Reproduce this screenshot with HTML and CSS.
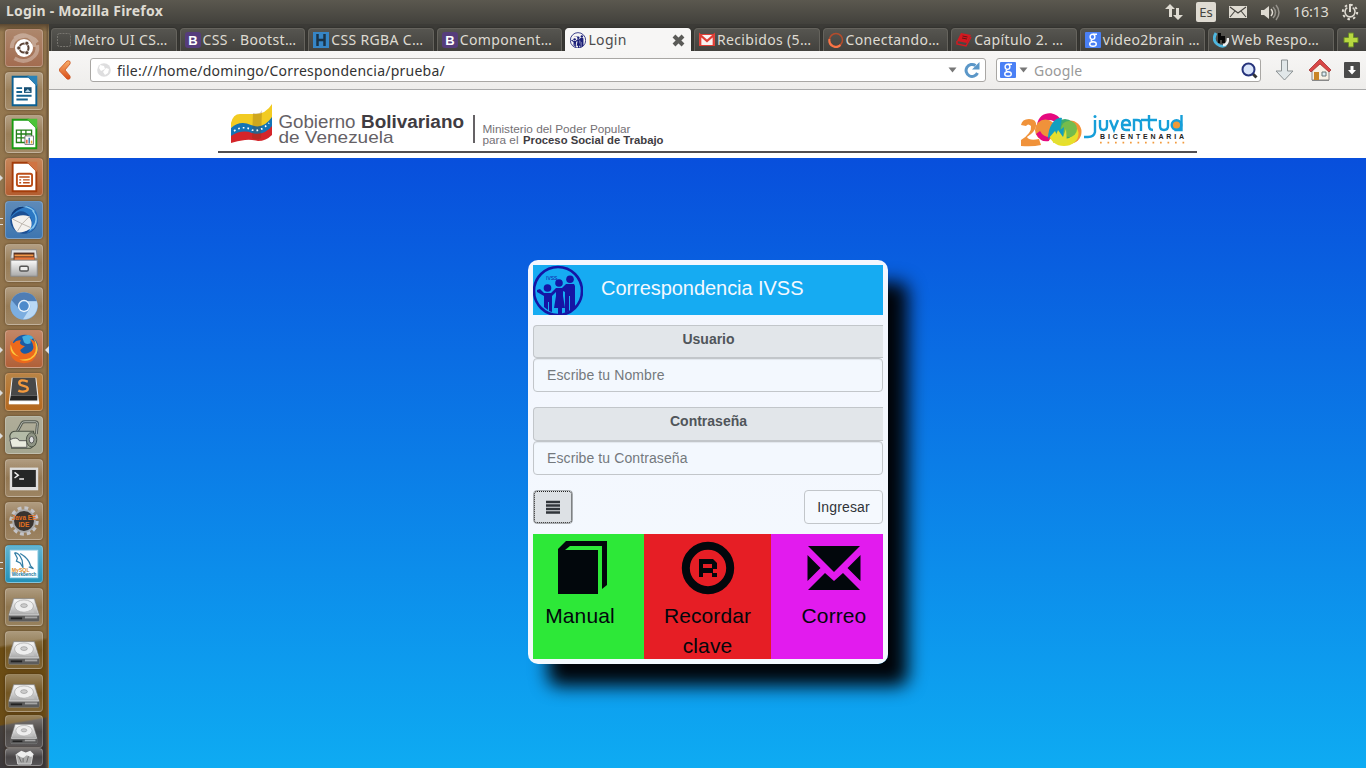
FILE: index.html
```html
<!DOCTYPE html>
<html lang="es">
<head>
<meta charset="utf-8">
<title>Login</title>
<link rel="stylesheet" href="styles.css">
</head>
<body>
<svg class="defs" width="0" height="0" aria-hidden="true">
  <defs>
    <linearGradient id="metal" x1="0" y1="0" x2="0" y2="1"><stop offset="0" stop-color="#fafafa"/><stop offset="1" stop-color="#a9a9a9"/></linearGradient>
    <linearGradient id="orange" x1="0" y1="0" x2="0" y2="1"><stop offset="0" stop-color="#f9b06c"/><stop offset="1" stop-color="#d84c17"/></linearGradient>
    <symbol id="disk" viewBox="0 0 38 38">
      <path d="M8 10h22l5 17v6q0 1-1 1H4q-1 0-1-1v-6z" fill="#d8d8d8" stroke="#777" stroke-width=".6"/>
      <path d="M9 11h20l5 16H4z" fill="url(#metal)"/>
      <ellipse cx="19" cy="18" rx="10" ry="6.500" fill="#eee" stroke="#aaa" stroke-width=".8"/>
      <ellipse cx="19" cy="17.500" rx="3.500" ry="2" fill="#ccc" stroke="#888" stroke-width=".6"/>
      <path d="M19 25l9-4 2 4z" fill="#c2c2c2"/>
      <path d="M3 28h32v5q0 1-1 1H4q-1 0-1-1z" fill="#5c5c5c"/><path d="M5 31h12" stroke="#222" stroke-width="2"/><path d="M20 30h13" stroke="#a5a5a5" stroke-width="2"/>
    </symbol>
    <symbol id="boot" viewBox="0 0 16 16"><rect width="16" height="16" rx="3" fill="#563d7c"/><text x="8" y="13" text-anchor="middle" class="fav-bold" fill="#fff">B</text></symbol>
    <symbol id="goog" viewBox="0 0 16 16"><rect width="16" height="16" rx="1" fill="#4a80f5"/><g fill="none" stroke="#fff" stroke-width="1.400"><ellipse cx="7.500" cy="4.800" rx="2.400" ry="2.600"/><path d="M8 2.200h4M7 7.500q-2 1.500 1 2.200"/><ellipse cx="8" cy="12" rx="3.300" ry="2.300"/></g></symbol>
    <symbol id="family" viewBox="0 0 50 50">
      <circle cx="25" cy="26" r="24" fill="none" stroke="currentColor" stroke-width="2.600"/>
      <g fill="currentColor"><circle cx="14.500" cy="23" r="3.800"/><circle cx="26" cy="18" r="3.800"/><circle cx="37" cy="14.300" r="3.800"/>
      <path d="M4 25l3-1 4 4h7l5-5h6l4-4h8l1 2v22l-5 4V31h-1v15l-4 2V27l-2-1v5l2 12h-3v7h-4v-7h-4l2-12v-4l-4 4v16l-3-1V37h-1v8l-4-3V31l-7-4z"/></g>
      <text x="13" y="15" class="tiny" fill="currentColor">IVSS</text>
    </symbol>
  </defs>
</svg>

<header class="topbar">
  <span class="window-title">Login - Mozilla Firefox</span>
  <div class="indicators">
    <svg width="18" height="18" viewBox="0 0 18 18" fill="#dfdbd2"><path d="M5 1l5 5H7v8H4V6H0zM13 17l-5-5h3V5h3v7h4z"/></svg>
    <span class="lang">Es</span>
    <svg width="18" height="14" viewBox="0 0 18 14"><path d="M0 1h18v12H0z" fill="#dfdbd2"/><path d="M1 2l8 6 8-6M1 12l5-6M17 12l-5-6" fill="none" stroke="#45433e" stroke-width="1.100"/></svg>
    <svg width="21" height="17" viewBox="0 0 21 17"><path d="M1 6h3l5-4v13l-5-4H1z" fill="#dfdbd2"/><g fill="none" stroke-width="1.500"><path d="M11 5q3 3.500 0 7" stroke="#dfdbd2"/><path d="M13 3q5 5.500 0 11M16 1q6 7.500 0 15" stroke="#96938c"/></g></svg>
    <span class="clock">16:13</span>
    <svg width="18" height="18" viewBox="0 0 18 18" fill="none" stroke="#dfdbd2"><circle cx="9" cy="9" r="7.200" stroke-width="2" stroke-dasharray="2.500 3.150"/><path d="M6.300 4.700a5 5 0 1 0 5.400 0" stroke-width="1.600"/><path d="M9 1v8" stroke-width="2"/></svg>
  </div>
</header>

<div class="desktop">
<nav class="launcher">
  <div class="tile t-dash"><svg viewBox="0 0 38 38"><path d="M6 19C6 5 25 2 33 13M9 30c12 7 26-1 24-14M9 9c10-8 21-1 21 9" fill="none" stroke="#fff" stroke-opacity=".3" stroke-width="4"/><circle cx="19" cy="19" r="9.500" fill="#fff"/><circle cx="19" cy="19" r="4.800" fill="none" stroke="#5b4336" stroke-width="2.200"/><g fill="#5b4336" stroke="#fff" stroke-width=".8"><circle cx="13.500" cy="19" r="2.200"/><circle cx="22" cy="14" r="2.200"/><circle cx="22" cy="24" r="2.200"/></g></svg></div>
  <div class="tile"><svg viewBox="0 0 38 38"><path d="M7 4h17l8 8v22H7z" fill="#fff" stroke="#0b5f92" stroke-width="2"/><path d="M22 3h11v11z" fill="#2b83b8"/><path d="M11 16h6M11 20h6M11 24h16M11 28h12" stroke="#16628f" stroke-width="2"/><path d="M19 15h8v6h-8z" fill="#164e72"/><path d="M20 20l3-3 3 3z" fill="#b3d3e6"/></svg></div>
  <div class="tile"><svg viewBox="0 0 38 38"><path d="M7 4h17l8 8v22H7z" fill="#fff" stroke="#199c12" stroke-width="2"/><path d="M22 3h11v11z" fill="#4cc338"/><path d="M11 15h16v13H11zM11 19h16M11 23h16M16 15v13M21 15v13" fill="none" stroke="#237e19" stroke-width="1.400"/><path d="M20 21h9v9h-9z" fill="#fff" stroke="#777"/><path d="M22 29v-4" stroke="#df542d" stroke-width="1.500"/><path d="M24.500 29v-6" stroke="#3675a8" stroke-width="1.500"/><path d="M27 29v-3" stroke="#e6aa27" stroke-width="1.500"/></svg></div>
  <div class="tile t-orange open"><svg viewBox="0 0 38 38"><path d="M7 4h17l8 8v22H7z" fill="#fff" stroke="#a33c0a" stroke-width="2"/><path d="M22 3h11v11z" fill="#d07442"/><rect x="11.500" y="15.500" width="16" height="13" rx="2" fill="#fff" stroke="#bb4d17" stroke-width="2"/><path d="M14 19h11M18 22h7M18 25h7M14 22h2M14 25h2" stroke="#bb4d17" stroke-width="1.500"/></svg></div>
  <div class="tile t-blue open two"><svg viewBox="0 0 38 38"><circle cx="19" cy="19" r="14.500" fill="#1c4f94"/><path d="M4 19C6 5 23-1 31 9c6 9 2 20-9 24 5-6 7-13 3-18C19 8 12 7 4 19z" fill="#2b78c4"/><path d="M6 18q9-6 18-3 5 6 2 13-8 5-14 4-5-4-6-14z" fill="#f4f1ee"/><path d="M7 18l10 5 8-8M12 31l5-8 9 4" fill="none" stroke="#bcb5ae"/><path d="M10 8q10-7 20 2M28 9q8 9 0 19M31 14q3 8-6 16" fill="none" stroke="#8bc7ed" stroke-width="1.200"/><path d="M5 16Q8 3 21 5 10 8 5 16z" fill="#123a78"/></svg></div>
  <div class="tile"><svg viewBox="0 0 38 38"><path d="M6 5h26l1 9H5z" fill="#e2e2e2" stroke="#888"/><path d="M8 8h22v9H8z" fill="#563122"/><path d="M9 10h20v2H9z" fill="#f39849"/><path d="M9 13h21v3H9z" fill="#e8763a"/><path d="M5 16h28v17H5z" fill="url(#metal)" stroke="#888"/><rect x="14.500" y="22.500" width="9" height="5" rx="1.500" fill="#eee" stroke="#555" stroke-width="1.500"/></svg></div>
  <div class="tile"><svg viewBox="0 0 38 38"><circle cx="19" cy="19" r="14.500" fill="#7caee0"/><path d="M6 13a14.500 14.500 0 0 1 26.500 1H19a6 6 0 0 0-6 7z" fill="#4f7db4"/><path d="M32.500 14a14.500 14.500 0 0 1-14.500 19l7-11q2-5-2-8z" fill="#b9d8f4"/><circle cx="19" cy="19" r="6.500" fill="#e8f2fb"/><circle cx="19" cy="19" r="5" fill="#4e8acb"/></svg></div>
  <div class="tile t-fire open active"><svg viewBox="0 0 38 38"><circle cx="20" cy="18" r="14" fill="#1b5ba5"/><path d="M17 6q8-4 12 1-4 3-3 6-5 2-7-1z" fill="#43aee0"/><path d="M5 10l3 3q3-4 8-3-3 3 1 5l3 1-5 4q2 6 9 3 7-2 4-10l-3-5q10 4 8 15-3 11-14 11Q5 33 4 20z" fill="#ed691c"/><path d="M28 6q10 12 2 21-7 7-16 3 14 1 17-8 2-8-3-16zM5 14q2 10 9 13Q3 25 5 14z" fill="#fbc43b"/></svg></div>
  <div class="tile t-sub open"><svg viewBox="0 0 38 38"><path d="M6 4h26l3 26H3z" fill="#eee"/><path d="M7 4h24l2 19H5z" fill="#484848"/><path d="M5 23h28v5H4z" fill="#242424"/><path d="M3 30.500h32" stroke="#fff" stroke-width="3"/><path d="M23 8q-9-3-9 1.500c0 4 9 2 9 6 0 3-6 4-10 2" fill="none" stroke="#f49a3e" stroke-width="2.500"/></svg></div>
  <div class="tile t-print open"><svg viewBox="0 0 38 38"><path d="M12 15l5-9q1-1 3-1h11q3 0 2 4l-1 9" fill="none" stroke="#555a50" stroke-width="3"/><path d="M12 15l5-9q1-1 3-1h11q3 0 2 4l-1 9" fill="none" stroke="#b9bcb4"/><path d="M4 20q1-5 6-5h19l2 14-5 4H6z" fill="#b4bba7" stroke="#4a5044" stroke-width="1.200"/><path d="M4 24q8-4 10 1h8v7H6z" fill="#e9ebdf" stroke="#555"/><ellipse cx="27" cy="24" rx="5.500" ry="7.500" fill="#8e9484" stroke="#4a5044"/><ellipse cx="27" cy="24" rx="2.500" ry="3.500" fill="#ddd" stroke="#555"/></svg></div>
  <div class="tile"><svg viewBox="0 0 38 38"><path d="M4 8h30v24H4z" fill="#ddd"/><path d="M6.500 10.500h25v18h-25z" fill="#252727"/><path d="M9 13l4 3-4 3M14 20h5" fill="none" stroke="#eee" stroke-width="1.500"/></svg></div>
  <div class="tile"><svg viewBox="0 0 38 38"><circle cx="19" cy="19" r="13.500" fill="none" stroke="#c4c4c8" stroke-width="4" stroke-dasharray="4 3.070"/><circle cx="19" cy="19" r="11.500" fill="#39332f" stroke="#aaa" stroke-width="2"/><text x="6" y="18" class="java" fill="#e3701f" textLength="26" lengthAdjust="spacingAndGlyphs">Java EE</text><text x="19" y="25.500" text-anchor="middle" class="java" fill="#e3701f">IDE</text></svg></div>
  <div class="tile t-sql open two"><svg viewBox="0 0 38 38"><rect x="4.500" y="4.500" width="29" height="29" fill="#fff" stroke="#b7dff0"/><path d="M9 7q5 0 8 8l1 8-3-5-4-2 1-3-3-6M15 8q9 5 11 13l3 3-5-2" fill="none" stroke="#357fa6" stroke-width="1.300"/><text x="6" y="27" class="sql" fill="#dc8b26">MySQL</text><text x="6" y="32" class="sql" fill="#14759b" textLength="26" lengthAdjust="spacingAndGlyphs">Workbench</text></svg></div>
  <div class="tile"><svg><use href="#disk"/></svg></div>
  <div class="tile"><svg><use href="#disk"/></svg></div>
  <div class="tile"><svg><use href="#disk"/></svg></div>
  <div class="tile folded"><svg><use href="#disk"/></svg></div>
  <div class="tile bin"><svg viewBox="0 0 38 18"><path d="M10 6h19l-2 11H12z" fill="#aaa" stroke="#ddd"/><path d="M13 8l3 7M18 8v7M24 8l-2 7" stroke="#666"/><path d="M11 5l5-3 5 2 5-2 4 4-3 3-5-2-4 3-5-2z" fill="#eee"/></svg></div>
</nav>

<main class="browser">
  <div class="tabs">
    <div class="tab"><svg width="16" height="16"><rect x="1.500" y="1.500" width="13" height="13" rx="2" fill="none" stroke="#77756f" stroke-dasharray="2 1"/></svg><span>Metro UI CS…</span></div>
    <div class="tab"><svg width="16" height="16"><use href="#boot"/></svg><span>CSS · Bootst…</span></div>
    <div class="tab"><svg width="16" height="16"><path d="M0 0h16v16H0z" fill="#3685c5"/><path d="M4.500 2v12M11.500 2v12M4 8h8" stroke="#1b3346" stroke-width="2.500"/></svg><span>CSS RGBA C…</span></div>
    <div class="tab"><svg width="16" height="16"><use href="#boot"/></svg><span>Component…</span></div>
    <div class="tab selected"><svg width="16" height="16" color="#1b1f78"><use href="#family"/></svg><span>Login</span><svg class="close" width="13" height="13" viewBox="0 0 13 13"><path d="M2 2l9 9M11 2l-9 9" stroke="#5b5b58" stroke-width="4"/></svg></div>
    <div class="tab"><svg width="16" height="16"><path d="M0 2h16v12H0z" fill="#f7f2f1"/><path d="M1.200 14V3l6.800 6 6.800-6v11" fill="none" stroke="#de3e35" stroke-width="2.300"/><path d="M0 2.500h16M0 13.500h16" stroke="#de3e35"/></svg><span>Recibidos (5…</span></div>
    <div class="tab"><svg width="16" height="16" fill="none"><circle cx="8" cy="8" r="6.500" stroke="#b44c2c" stroke-width="1.500"/><path d="M1.500 7a6.500 6.500 0 0 0 11 6" stroke="#fa7547" stroke-width="2"/></svg><span>Conectando…</span></div>
    <div class="tab"><svg width="16" height="16"><path d="M5 1l10 2-4 8-10-2z" fill="#d61820"/><path d="M1 9v3l9 2 5-9" fill="none" stroke="#d61820" stroke-width="1.500"/><path d="M6.500 4l5 1M6 6l5 1" stroke="#681414"/></svg><span>Capítulo 2. …</span></div>
    <div class="tab"><svg width="16" height="16"><use href="#goog"/></svg><span>video2brain …</span></div>
    <div class="tab"><svg width="16" height="16"><path d="M3 1q-4 7 1 11 5 4 9 1" fill="none" stroke="#4eb7df" stroke-width="2.800"/><path d="M10 13q5 0 5-7" fill="none" stroke="#eee" stroke-width="2.500"/><path d="M5 1h3v3h4v7H9V8H7v3H5z" fill="#080808"/></svg><span>Web Respo…</span></div>
    <div class="tab newtab"><svg width="16" height="16"><path d="M5.500 1h5v4.500H15v5h-4.500V15h-5v-4.500H1v-5h4.500z" fill="#b8d840" stroke="#69882b"/></svg></div>
  </div>
  <div class="toolbar">
    <svg class="back" width="13" height="20" viewBox="0 0 13 20"><path d="M8 1q4-1 3 3l-5 6 5 6q1 4-3 3L.500 11V9z" fill="url(#orange)" stroke="#c9541f" stroke-width=".8"/></svg>
    <div class="address"><svg width="14" height="14"><circle cx="7" cy="7" r="6.800" fill="#dededf"/><path d="M3 2l4 1 1 3-4 2-2-3zM9 5l3 1-1 4-3 2-2-3z" fill="#fff"/></svg><span>file:///home/domingo/Correspondencia/prueba/</span>
      <svg class="drop" width="9" height="6"><path d="M.500.500h8L4.500 5.500z" fill="#777"/></svg><svg class="reload" width="16" height="16"><path d="M13.500 11a6 6 0 1 1-2-7.500" fill="none" stroke="#5b97c8" stroke-width="3"/><path d="M15.500 0v7.500H8z" fill="#5b97c8"/></svg></div>
    <div class="search"><svg width="16" height="16"><use href="#goog"/></svg><svg class="drop2" width="9" height="6"><path d="M.500.500h8L4.500 5.500z" fill="#777"/></svg><span>Google</span><svg class="lens" width="17" height="17"><path d="M11 11l4.500 4.500" stroke="#333" stroke-width="3"/><circle cx="7.500" cy="7.500" r="6" fill="#dae5fa" stroke="#26337c" stroke-width="2"/></svg></div>
    <svg class="download" width="19" height="22"><path d="M6.500 1h6v11H18l-8.500 9L1 12h5.500z" fill="#e1e7e9" stroke="#8b9193"/></svg>
    <svg class="home" width="24" height="24"><path d="M4 12v10h17V12l-8-8z" fill="#f7f1e6" stroke="#888"/><path d="M6 14h5v8H6z" fill="#c98425"/><path d="M14 14h4v4h-4z" fill="#ddecf5" stroke="#677"/><path d="M4 22.500h17" stroke="#888"/><path d="M1 12L12 1l11 11-2 2-9-8-9 8z" fill="#d94746" stroke="#a33332" stroke-width=".8"/></svg>
    <svg class="save" width="16" height="16"><rect width="16" height="16" rx="1" fill="#4a4a4a"/><path d="M6.500 4h3v4h2.500l-4 4.500L4 8h2.500z" fill="#fff"/></svg>
  </div>

  <section class="page">
    <div class="banner">
      <svg width="980" height="68" viewBox="218 90 980 68">
        <path d="M231 123q2-9 9-9 8 0 15 0 11 0 17-10v17q-9 10-20 5-12-5-21 2z" fill="#f2cb22"/>
        <path d="M231 128q9-8 20-3 12 5 21-8v13q-8 10-20 5-12-4-21 3z" fill="#1474b6"/>
        <path d="M231 136q11-7 21-3 12 3 20-7v9q-6 6-14 6-8-2-13-1-8 1-14 3z" fill="#d4252a"/>
        <path d="M253 113q7 2 9-3l-1 28q-5 3-9 0z" fill="#663a12" opacity=".25"/>
        <path d="M234 131q9-6 18-1 9 2 17-7" fill="none" stroke="#fff" stroke-width="1.700" stroke-dasharray="1.700 3"/>
        <text x="278.500" y="128.300" class="gov" textLength="77" lengthAdjust="spacingAndGlyphs">Gobierno</text><text x="361" y="128.300" class="gov gov-bold" textLength="103" lengthAdjust="spacingAndGlyphs">Bolivariano</text>
        <text x="278.500" y="143" class="gov second-line" textLength="115" lengthAdjust="spacingAndGlyphs">de Venezuela</text>
        <path d="M474 115v28" stroke="#656265" stroke-width="2"/>
        <text x="482.500" y="133" class="min" textLength="148" lengthAdjust="spacingAndGlyphs">Ministerio del Poder Popular</text>
        <text x="482.500" y="143.500" class="min" textLength="36" lengthAdjust="spacingAndGlyphs">para el</text><text x="523" y="143.500" class="min min-bold" textLength="140.500" lengthAdjust="spacingAndGlyphs">Proceso Social de Trabajo</text>
        <path d="M218 152h979" stroke="#504e52" stroke-width="2"/>
        <path d="M1037 125c2-14 18-15 24-5l-4 4c-6-7-14-4-16 3z" fill="#e5097f"/>
        <circle cx="1045.500" cy="130" r="10.500" fill="#f0923a"/>
        <path d="M1036 134q5 9 13 7l1-4q-7 0-10-6z" fill="#e5097f"/>
        <circle cx="1070" cy="132" r="11.500" fill="#f39336"/><ellipse cx="1064" cy="134" rx="14.500" ry="12" fill="#e7df2a"/><circle cx="1065" cy="129" r="10" fill="#3eab6c"/><circle cx="1069" cy="129" r="8" fill="#75bc4c"/>
        <path d="M1048 139c0-14 8-23 14-21l-2 12 4-3-1 11-8-7z" fill="#119fc0"/><path d="M1053 143l5-13 5 7 3-8 1 14z" fill="#e3df33"/>
        <path d="M1021 125q1-6 8-6 8 0 7 7-1 6-9 11 2 4 12 2l2 6q-8 2-20 1v-6q11-7 10-14-3-3-5 0z" fill="#f0923a"/>
        <g fill="none" stroke="#169fd9" stroke-width="2.400"><path d="M1095 120v12q-1 5-7 5h-4"/><path d="M1100 120v6q0 4 3.500 4t3.500-4v-6M1110 120l4 10 4-10M1122 125h8q0-5-4-5t-4 5 4 5h4M1134 131v-11h3q4 0 4 4v7M1149 115v11q0 4 4 4M1141 120h16M1160 120v6q0 4 4 4t4-4v-6M1181.500 115v15h-7"/><circle cx="1176.500" cy="125" r="4.800" fill="#f19a37"/></g><circle cx="1095" cy="116.500" r="1.500" fill="#169fd9"/>
        <g class="bic"><text x="1100" y="138.500" textLength="84">BICENTENARIA</text></g>
        <path d="M1100 142.700h87" stroke="#f29b3e" stroke-width="1.700" stroke-dasharray="1.700 5.800"/>
      </svg>
    </div>
    <div class="stage">
      <form class="card">
        <div class="card-head"><svg width="50" height="50" color="#1515a5"><use href="#family"/></svg><h1>Correspondencia IVSS</h1></div>
        <label class="label">Usuario</label>
        <input class="field" type="text" placeholder="Escribe tu Nombre">
        <label class="label second">Contraseña</label>
        <input class="field" type="text" placeholder="Escribe tu Contraseña">
        <div class="actions"><button type="button" class="btn menu"><svg width="14" height="14"><path d="M0 2h14M0 5.500h14M0 9h14M0 12.500h14" stroke="#30353a" stroke-width="2.400"/></svg></button><button type="button" class="btn">Ingresar</button></div>
        <div class="shortcuts">
          <div class="box green"><svg width="54" height="54" viewBox="0 0 54 54" fill="#02070c"><path d="M3 8l8-8h41v44l-5 4V5H15l-5 4h33v44H3z"/></svg><span>Manual</span></div>
          <div class="box red"><svg width="54" height="54" viewBox="0 0 54 54"><circle cx="27" cy="27" r="22.200" fill="none" stroke="#02070c" stroke-width="8"/><path d="M18 18h14l4 4v6h-4v4h4v4h-5v-4h-9v4h-4zm4 5v4h9v-4z" fill="#02070c" fill-rule="evenodd"/></svg><span>Recordar clave</span></div>
          <div class="box pink"><svg width="54" height="54" viewBox="0 0 54 54" fill="#02070c"><path d="M1 5h52L27 31zM.500 14L13.500 27 .500 40zM53.500 14L40.500 27l13 13zM1 49l17-17 9 8 9-8 17 17z"/></svg><span>Correo</span></div>
        </div>
      </form>
    </div>
  </section>
</main>
</div>
</body>
</html>
```
FILE: styles.css
```css
* { box-sizing: border-box; }
html, body { margin: 0; width: 1366px; height: 768px; overflow: hidden; }
body { font-family: "Noto Sans", "Open Sans", sans-serif; font-size: 14px; display: flex; flex-direction: column; }
svg { display: block; flex: none; }
.defs { position: absolute; }
.topbar { height: 24px; flex: none; display: flex; align-items: center; justify-content: space-between; padding: 0 7px 0 6px; background: linear-gradient(#5b584f, #42413c); color: #dfdbd2; }
.window-title { font-weight: 700; letter-spacing: .22px; line-height: 22px; padding-bottom: 2px; }
.indicators { display: flex; align-items: center; }
.lang { margin: 0 13px 0 13px; width: 20px; height: 20px; border-radius: 2px; background: #dfdbd2; color: #45433e; font-size: 13px; line-height: 20px; text-align: center; }
.indicators svg:nth-of-type(3) { margin-left: 13px; }
.clock { margin: 0 12px; padding-bottom: 2px; font-size: 14.500px; letter-spacing: -.3px; width: 36px; white-space: nowrap; }
.desktop { display: flex; height: 744px; }
.launcher { width: 49px; flex: none; padding: 5px 0 0 5px; background: linear-gradient(#5b4730 0, transparent 8px), linear-gradient(90deg, transparent 45px, #695338 48px, #b19b70 49px), linear-gradient(170deg, #967951 0, #8c6f48 530px, #866d42 612px, #6b4c13 615px, #6b4d17 690px, #45403d 692px, #38363a 744px); }
.tile { position: relative; width: 38px; height: 38px; margin-bottom: 5px; border: 1px solid rgba(255,255,255,.22); border-radius: 4px; background: linear-gradient(rgba(255,255,255,.3), rgba(255,255,255,.06) 50%, rgba(255,255,255,.14)); box-shadow: 0 0 3px rgba(50,30,10,.6); }
.tile svg { width: 36px; height: 36px; }
.t-dash { background: linear-gradient(#ad876c, #a36c50); }
.t-orange { background: linear-gradient(#c78558, #b45e31); }
.t-blue { background: linear-gradient(#5e8ab8, #3e76b0); }
.t-fire { background: linear-gradient(#c18666, #b16038); }
.t-sub { background: linear-gradient(#b98445, #b4681f); }
.t-print { background: linear-gradient(#b0ad99, #a5a691); }
.t-sql { background: linear-gradient(#62b4d1, #2492b9); }
.open::before { content: ""; position: absolute; left: -6px; top: 16px; border: 3px solid transparent; border-left-color: #ddd; border-right: 0; }
.two::before { width: 3px; height: 5px; border: solid #ddd; border-width: 1px 0; }
.active::after { content: ""; position: absolute; right: -7px; top: 15px; border: 4px solid transparent; border-right-color: #ddd; border-left: 0; }
.folded { height: 33px; margin: -2px 0 0; }
.folded svg { height: 31px; }
.bin { height: 18px; margin: 0; }
.bin svg { height: 16px; }
.browser { width: 1317px; height: 744px; }
.tabs { height: 27px; padding: 4px 0 0 2px; display: flex; gap: 3px; background: #3c3b37; overflow: hidden; }
.tab { width: 125.6px; flex: none; height: 23px; padding: 0 5px 0 4px; display: flex; align-items: center; gap: 2px; color: #dfdbd2; background: linear-gradient(#565550, #42413d); border: 1px solid #65635d; border-bottom: 0; border-radius: 4px 4px 0 0; white-space: nowrap; box-shadow: 0 0 2px #20201d; }
.tab span { letter-spacing: .35px; padding-bottom: 2px; }
.selected { background: #f7f6f5; border-color: #f7f6f5; color: #4c4c4c; }
.close { margin-left: auto; }
.newtab { width: 34px; padding-left: 5px; }
.toolbar { height: 39px; border-bottom: 1px solid #aaa; padding: 0 0 0 10px; display: flex; align-items: center; background: linear-gradient(#f7f6f5, #eeedeb); }
.address, .search { height: 24px; border: 1px solid #a9a7a4; border-radius: 3px; background: #fff; display: flex; align-items: center; color: #333; white-space: nowrap; }
.address { width: 896px; margin-left: 18px; padding: 0 5px 0 6px; }
.address span { margin-left: 6px; font-size: 14px; letter-spacing: .24px; }
.drop { margin-left: auto; margin-right: 7px; }
.search { width: 265px; margin-left: 10px; padding: 0 2px 0 3px; color: #999; }
.search span { letter-spacing: .2px; }
.drop2 { margin: 0 6px 0 3px; }
.lens { margin-left: auto; }
.download { margin-left: 14px; }
.home { margin-left: 14px; }
.save { margin-left: 12px; }
.banner { height: 68px; background: #fff; padding-left: 169px; }
.stage { height: 610px; padding: 102px 0 0 479px; background: linear-gradient(#084fdc, #0eabf2); }
.card { width: 360px; height: 404px; padding: 5px; border-radius: 10px; background: linear-gradient(#f3f6fe, #f4f9fe); box-shadow: 20px 22px 18px #02050a; font-family: "Liberation Sans", Arial, sans-serif; }
.card-head { height: 50px; display: flex; background: #16abf2; }
.card-head h1 { margin: 11px 0 0 18px; font-size: 20px; line-height: 24px; font-weight: 400; letter-spacing: -.05px; color: #f4f8fe; }
.label { display: block; height: 33px; margin-top: 10px; padding-top: 5px; border: 1px solid #c2c6ca; border-right: 0; border-radius: 4px 0 0 4px; background: #e2e6ea; color: #50555a; font-weight: 700; font-size: 14px; line-height: 16px; text-align: center; }
.second { height: 34px; margin-top: 15px; }
.field { display: block; width: 350px; height: 34px; padding: 0 13px; border: 1px solid #c2c6ca; border-radius: 4px; background: #f3f8fe; font: 14px "Liberation Sans", Arial, sans-serif; letter-spacing: .1px; box-shadow: inset 0 1px 1px rgba(0,0,0,.07); }
.field::placeholder { color: #74797d; opacity: 1; }
.actions { display: flex; justify-content: space-between; margin-top: 15px; }
.btn { width: 79px; height: 34px; padding: 0; border: 1px solid #c2c6ca; border-radius: 4px; background: #f5f9fe; color: #303439; font: 14px "Liberation Sans", Arial, sans-serif; letter-spacing: .15px; }
.menu { width: 40px; background: #dde1e5; border-color: #a9adb1; outline: 1px dotted #222; outline-offset: -2px; display: flex; align-items: center; justify-content: center; }
.shortcuts { display: grid; grid-template-columns: 111px 127px 112px; grid-template-rows: 125px; margin-top: 10px; }
.box { display: flex; flex-direction: column; align-items: center; padding-top: 7px; color: #02070c; font-size: 21px; line-height: 30px; text-align: center; letter-spacing: .1px; }
.box span { margin-top: 6px; }
.green { background: #2de838; padding-right: 17px; }
.green svg { margin-left: 3px; }
.red { background: #e61e25; }
.red span { width: 100px; }
.pink { background: #e21bee; padding-left: 14px; }
.fav-bold { font: 700 13px "Liberation Sans", sans-serif; }
.tiny { font: 5px "Liberation Sans", sans-serif; }
.java { font: 700 7px "Liberation Sans", sans-serif; }
.sql { font: 700 5.500px "Liberation Sans", sans-serif; }
.gov { font: 17.500px/1 "Liberation Sans", sans-serif; fill: #656166; }
.gov-bold { font-weight: 700; fill: #403c42; }
.second-line { font-size: 17px; }
.min { font: 10px "Liberation Sans", sans-serif; fill: #747075; }
.min-bold { font-weight: 700; fill: #403c42; }
.bic { font: 700 7px "Liberation Sans", sans-serif; fill: #222; }
```
